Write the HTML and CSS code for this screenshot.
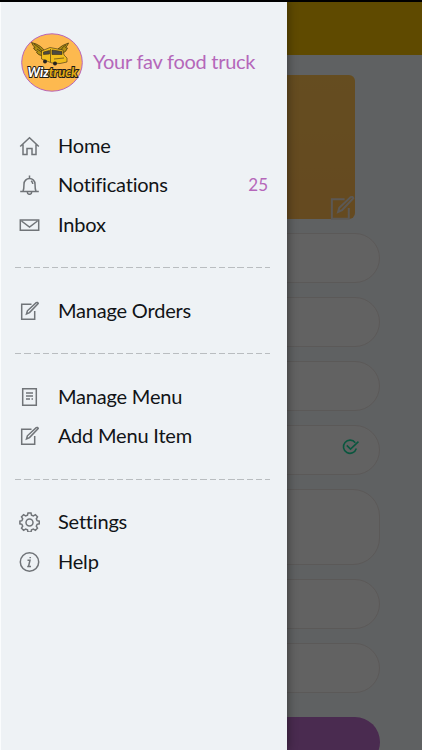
FILE: index.html
```html
<!DOCTYPE html>
<html lang="en">
  <head>
    <meta charset="UTF-8" />
    <meta name="viewport" content="width=device-width, initial-scale=1.0" />
    <title>WizTruck</title>
    <link rel="stylesheet" href="styles.css">
  </head>
  <body>
    <svg class="icon-defs" width="0" height="0">
      <symbol id="edit" viewBox="0 0 20 20">
        <path d="M12 3.200H2.200v15h13V10" />
        <path d="M7 13l.9-3.200L16.700 1.600q1.500-.6 2 .9L10 11.600z" />
      </symbol>
      <linearGradient id="logo-fill">
        <stop offset="0.4" stop-color="#fff" />
        <stop offset="0.4" stop-color="#e0aa12" />
      </linearGradient>
    </svg>

    <div class="page">
      <div class="topbar"></div>
      <div class="profile">
        <div class="cover">
          <svg class="cover-edit"><use href="#edit" /></svg>
        </div>
        <div class="field"></div>
        <div class="field"></div>
        <div class="field"></div>
        <div class="field">
          <svg class="check" viewBox="0 0 16 15">
            <path d="M12.500 3.500A6.200 6.200 0 1 0 13.500 9" />
            <path d="M4.500 6l3.500 3.500L15.500 2.500" />
          </svg>
        </div>
        <div class="field field-large"></div>
        <div class="field"></div>
        <div class="field"></div>
        <div class="save"></div>
      </div>
    </div>

    <div class="overlay"></div>
    <div class="status-line"></div>

    <div class="drawer">
      <div class="drawer-header">
        <svg class="avatar" viewBox="0 0 62 59">
          <ellipse class="plate" cx="31" cy="29.500" rx="30.300" ry="28.700" />
          <g class="wings">
            <path d="M25 20Q21 12 10.500 9.500Q12 13 14 14.500L12.500 15Q14 18 16.500 18.500L15.500 19.500Q17 22 22 23z" />
            <path d="M37 16Q41 12 47.500 10Q46.500 13 44.500 14.500L46.500 15Q45 19 42 20z" />
            <path class="line" d="M13 11Q20 15 23 21M16 16Q20 18 22 21M45 12Q41 14 40 17" />
          </g>
          <g class="bus">
            <path d="M20.500 18L29 14.500L42 17L43 22L46 25V29L39 30.500L31 30L20.500 26z" />
            <path class="glass" d="M22.500 19l6-1.500v3.500l-6 .5zM31 17l10 1.500v3l-10 0z" />
            <path class="line" d="M29.500 16V29M33 26l10-1" />
            <circle class="wheel" cx="24" cy="28.500" r="2" />
            <circle class="wheel" cx="34" cy="30.500" r="2" />
          </g>
          <text class="logo-text" x="6.500" y="43.500" textLength="50" lengthAdjust="spacingAndGlyphs">Wiztruck</text>
        </svg>
        <span class="title">Your fav food truck</span>
      </div>

      <nav>
        <div class="item">
          <svg class="icon" viewBox="0 0 20 20"><path d="M.7 10.500L10 1.700l9.300 8.800M3.500 8.500V18.500h4v-6h5v6h4V8.500" /></svg>
          <span>Home</span>
        </div>
        <div class="item">
          <svg class="icon" viewBox="0 0 20 20"><path d="M.7 16.500h18.600M3.500 16.500Q4.500 14 4.500 9a5.500 5.500 0 0 1 11 0q0 5 1 7.500M10 3.500V.5M11.500 6q1.500 .6 1.800 3M7.800 17q0 2.300 2.200 2.300t2.200-2.300" /></svg>
          <span>Notifications</span>
          <span class="count">25</span>
        </div>
        <div class="item">
          <svg class="icon" viewBox="0 0 20 20"><path d="M.8 5h18.400v10.200H.8zM2 6l8 6 8-6" /></svg>
          <span>Inbox</span>
        </div>
        <div class="divider"></div>
        <div class="item">
          <svg class="icon"><use href="#edit" /></svg>
          <span>Manage Orders</span>
        </div>
        <div class="divider"></div>
        <div class="item">
          <svg class="icon" viewBox="0 0 20 20"><path d="M3.200 1.700h13.600v16.600H3.200zM6.500 6h7M6.500 9h7M6.500 12h4M12 12h1.500" /></svg>
          <span>Manage Menu</span>
        </div>
        <div class="item">
          <svg class="icon"><use href="#edit" /></svg>
          <span>Add Menu Item</span>
        </div>
        <div class="divider"></div>
        <div class="item">
          <svg class="icon" viewBox="0 0 20 20">
            <path d="M8.500 .9h3l.5 2.200 1.900.8 2-1.200 2.100 2.100-1.200 2 .8 1.900 2.200.5v2.600l-2.200.5-.8 1.900 1.200 2-2.100 2.100-2-1.200-1.900.8-.5 2.200h-3l-.5-2.200-1.900-.8-2 1.200L2 16.200l1.200-2-.8-1.900-2-.5V9.200l2-.5.8-1.900-1.200-2 2.100-2.100 2 1.200 1.900-.8z" />
            <circle cx="10" cy="10.500" r="3.500" />
          </svg>
          <span>Settings</span>
        </div>
        <div class="item">
          <svg class="icon" viewBox="0 0 20 20">
            <circle cx="10" cy="10" r="9.200" />
            <path d="M8 8.200h2.500L9 14.500h2.500M7.700 14.500H9M10.700 5v1.200" />
          </svg>
          <span>Help</span>
        </div>
      </nav>
    </div>
  </body>
</html>
```

FILE: styles.css
```css
body {
  margin: 0;
  height: 750px;
  position: relative;
  overflow: hidden;
  background-color: #eef2f5;
  font-family: Lato, sans-serif;
}

svg {
  flex-shrink: 0;
}

.icon-defs {
  position: absolute;
}

/* page behind the drawer */
.topbar {
  height: 55px;
  background-color: #edb900;
}

.profile {
  width: 338px;
  margin: 20px 0 0 42px;
  display: flex;
  flex-direction: column;
  gap: 14px;
}

.cover {
  width: 288px;
  height: 144px;
  margin-left: 25px;
  border-radius: 6px;
  background: linear-gradient(#fdc050, #fdb850);
  position: relative;
}

.cover-edit {
  position: absolute;
  right: 0;
  bottom: -2px;
  width: 26px;
  height: 26px;
  fill: none;
  stroke: #e4dcd4;
  stroke-width: 1.5;
}

.field {
  height: 50px;
  box-sizing: border-box;
  border: 1px solid #e4dedc;
  border-radius: 25px;
  background-color: #f5f4f4;
  display: flex;
  align-items: center;
  justify-content: flex-end;
  padding-right: 20px;
}

.field-large {
  height: 76px;
  border-radius: 27px;
}

.check {
  width: 17px;
  height: 16px;
  margin-top: -6px;
  fill: none;
  stroke: #18d89c;
  stroke-width: 1.5;
}

.save {
  height: 50px;
  margin-top: 10px;
  border-radius: 25px;
  background-color: #b96bc8;
}

.overlay {
  position: absolute;
  top: 0;
  left: 0;
  width: 100%;
  height: 100%;
  background-color: rgba(0, 0, 0, 0.6);
}

.status-line {
  position: absolute;
  top: 0;
  left: 0;
  width: 100%;
  height: 2px;
  background-color: #000;
  z-index: 2;
}

/* side menu */
.drawer {
  position: absolute;
  top: 0;
  left: 0;
  width: 287px;
  height: 750px;
  box-sizing: border-box;
  border-left: 1px solid #fafcfd;
  background-color: #eef2f5;
  box-shadow: 0 0 10px rgba(0, 0, 0, 0.45);
}

.drawer-header {
  display: flex;
  align-items: center;
  gap: 10px;
  padding: 33px 0 0 20px;
  margin-bottom: 34px;
}

.avatar {
  width: 62px;
  height: 59px;
}

.plate {
  fill: #fdb94f;
  stroke: #b865b8;
  stroke-width: 1;
}

.wings path {
  fill: #b09012;
  stroke: #4a3b10;
  stroke-width: 0.8;
}

.bus path {
  fill: #f0bd1c;
  stroke: #382e18;
  stroke-width: 0.6;
}

.bus .glass {
  fill: #4b4a42;
}

.wings .line,
.bus .line {
  fill: none;
}

.wheel {
  fill: #252320;
}

.logo-text {
  font-size: 14px;
  font-weight: 900;
  font-style: italic;
  fill: url(#logo-fill);
  stroke: #1c1a17;
  stroke-width: 2;
  paint-order: stroke;
}

.title {
  margin-top: -3px;
  font-size: 20px;
  line-height: 24px;
  letter-spacing: -0.27px;
  color: #b567ba;
  white-space: nowrap;
}

.item {
  height: 39.5px;
  display: flex;
  align-items: center;
  padding: 0 19px 0 18px;
  font-size: 20px;
  letter-spacing: -0.2px;
  color: #111417;
}

.item span {
  margin-top: -2px;
}

.icon {
  width: 21px;
  height: 20px;
  margin-right: 18px;
  fill: none;
  stroke: #707478;
  stroke-width: 1.5;
}

.item .count {
  margin: -1px 0 0 auto;
  font-size: 17px;
  letter-spacing: 0;
  color: #b567ba;
}

.divider {
  height: 1px;
  width: 255px;
  margin: 22.5px 0 23px 14px;
  background: repeating-linear-gradient(to right, #b9bdc0 0, #b9bdc0 6.3px, transparent 6.3px, transparent 9.27px);
}
```
